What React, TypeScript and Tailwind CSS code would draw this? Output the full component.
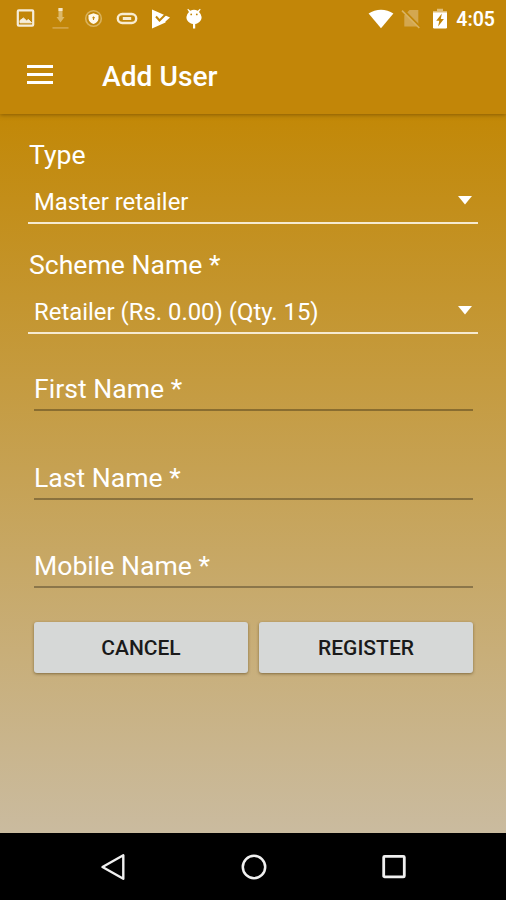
import { useState } from 'react';

const SCHEME = 'Retailer (Rs. 0.00) (Qty. 15)';

function StatusBar() {
  return (
    <div className="h-[37px] pl-4 pr-[11px] flex items-center justify-between text-white">
      <div className="flex items-center gap-[12px]">
        <svg width="22" height="22" viewBox="0 0 22 22" className="opacity-85">
          <rect x="1.8" y="2.3" width="15.4" height="15.4" rx="1" fill="none" stroke="currentColor" strokeWidth="2.2" />
          <path d="M4 14.8 V12.5 L7.5 10 L10.5 12.8 L12.5 11.5 L15.5 14.8 Z" fill="currentColor" stroke="currentColor" strokeWidth="1" />
        </svg>
        <svg width="22" height="24" viewBox="0 0 22 24">
          <path d="M8.5 1 H12.5 V10 H14.5 L10.5 15.5 L6.5 10 H8.5 Z" fill="#dcb868" />
          <rect x="8.5" y="1" width="4" height="3" fill="#f4e6c8" />
          <rect x="2.5" y="20" width="16" height="1.8" fill="#d3a244" />
        </svg>
        <svg width="20" height="22" viewBox="0 0 20 22">
          <circle cx="9.5" cy="10.5" r="7.8" fill="none" stroke="#d9b25c" strokeWidth="1.6" />
          <path d="M9.5 5.3 L14.5 6.9 V10.5 C14.5 13.3 12 15.1 9.5 16.1 C7 15.1 4.5 13.3 4.5 10.5 V6.9 Z" fill="#fff8ea" />
          <path d="M9.5 8.4 V12 M8.3 9.8 H11" stroke="#c28a12" strokeWidth="1.1" />
        </svg>
        <svg width="22" height="22" viewBox="0 0 22 22" fill="none" stroke="#f8ecd2">
          <rect x="1.8" y="6" width="18.4" height="9" rx="4.5" strokeWidth="2.4" />
          <path d="M6.8 10.5 H15.2" strokeWidth="3" />
        </svg>
        <svg width="22" height="22" viewBox="0 0 22 22">
          <path d="M2 1.5 L20 9.5 L15.5 13.5 V14.5 L2 20.5 Z" fill="currentColor" />
          <path d="M6 8.5 L9.5 12.5 L16.5 5.5" fill="none" stroke="#c28608" strokeWidth="2" />
        </svg>
        <svg width="20" height="22" viewBox="0 0 20 22" fill="currentColor">
          <path d="M4 .7 L6.3 2.7 A8 8 0 0 1 13.7 2.7 L16 .7 L16.6 1.5 L15 4.1 A7.8 7.8 0 0 1 17.6 9 C17.6 13 14.5 15.5 11.2 16 V20.5 H9 V16 C5.5 15.5 2.4 13 2.4 9 A7.8 7.8 0 0 1 5 4.1 L3.4 1.5 Z" />
          <circle cx="7.2" cy="6.4" r="0.9" fill="#c28608" />
          <circle cx="12.8" cy="6.4" r="0.9" fill="#c28608" />
        </svg>
      </div>
      <div className="flex items-center">
        <svg width="26" height="22" viewBox="0 0 26 22">
          <path d="M13 20.3 L0.6 5.6 C7.6 0.4 18.4 0.4 25.4 5.6 Z" fill="currentColor" />
        </svg>
        <svg width="20" height="22" viewBox="0 0 20 22" className="ml-[7px]">
          <path d="M8.5 2 H17.3 V18.5 H3.3 V7.5 Z" fill="#d3a750" />
          <path d="M1.6 1.5 L19.4 19.5" stroke="#c28608" strokeWidth="2.6" />
          <path d="M1 2.6 L18.3 20" stroke="#d9b364" strokeWidth="1.6" />
        </svg>
        <svg width="16" height="22" viewBox="0 0 16 22" className="ml-[11px]">
          <path d="M5 0.8 H11 V3 H15 V8 H1 V3 H5 Z" fill="#e0bd77" />
          <path d="M1 4.5 H15 V19.2 Q15 20.4 13.8 20.4 H2.2 Q1 20.4 1 19.2 Z" fill="currentColor" />
          <path d="M9.9 5.6 L4.2 12.8 H7.3 L6.1 18.4 L11.9 10.9 H8.8 Z" fill="#c28608" />
        </svg>
        <span className="ml-[8px] pt-0.5 text-[19.5px] leading-none font-semibold">4:05</span>
      </div>
    </div>
  );
}

function AppBar() {
  return (
    <header className="relative bg-[#c28608] shadow-[0_1px_4px_rgba(80,50,0,0.5)]">
      <StatusBar />
      <div className="h-[77px] pl-[27px] flex items-center">
        <button aria-label="Menu" className="flex flex-col gap-[5px] -mt-0.5">
          <span className="block w-[26px] h-[3px] bg-white" />
          <span className="block w-[26px] h-[3px] bg-white" />
          <span className="block w-[26px] h-[3px] bg-white" />
        </button>
        <h1 className="ml-[49px] pt-0.5 text-[28.2px] leading-8 font-medium text-white">Add User</h1>
      </div>
    </header>
  );
}

function SelectField({ label, value }: { label: string; value: string }) {
  return (
    <div>
      <div className="pl-px text-[26.6px] leading-8">{label}</div>
      <button className="mt-[9px] w-full h-[44px] pt-px pl-1.5 pr-[6px] flex items-center justify-between border-b-2 border-[#f6ead0]">
        <span className="text-[23.9px] leading-8">{value}</span>
        <svg width="14" height="9" viewBox="0 0 14 9" className="-mt-0.5">
          <path d="M0 0 H14 L7 8.5 Z" fill="currentColor" />
        </svg>
      </button>
    </div>
  );
}

function TextField({ label, value, onChange }: { label: string; value: string; onChange: (v: string) => void }) {
  return (
    <input
      value={value}
      placeholder={label}
      onChange={(e) => onChange(e.target.value)}
      className="block w-full h-[39px] pb-1 text-[26.6px] leading-8 border-b-2 border-black/30 bg-transparent outline-none placeholder:text-white"
    />
  );
}

export default function App() {
  const [firstName, setFirstName] = useState('');
  const [lastName, setLastName] = useState('');
  const [mobile, setMobile] = useState('');

  return (
    <div className="w-full h-[900px] flex flex-col font-['Roboto',sans-serif] bg-black overflow-hidden">
      <AppBar />
      <main className="h-[719px] px-7 pt-[25px] text-white bg-[linear-gradient(to_bottom,#c28807,#cabb9f)]">
        <div className="flex flex-col gap-[25px]">
          <SelectField label="Type" value="Master retailer" />
          <SelectField label="Scheme Name *" value={SCHEME} />
        </div>
        <div className="mt-[38px] pl-1.5 pr-[5px] flex flex-col gap-[49.5px]">
          <TextField label="First Name *" value={firstName} onChange={setFirstName} />
          <TextField label="Last Name *" value={lastName} onChange={setLastName} />
          <TextField label="Mobile Name *" value={mobile} onChange={setMobile} />
        </div>
        <div className="mt-[34px] pl-1.5 pr-[5px] grid grid-cols-2 gap-[11px] text-[21px] font-medium text-[#1a1a1a]">
          <button className="h-[51px] pt-0.5 rounded-[3px] bg-[#d6d8d7] shadow-[0_1px_3px_rgba(60,40,0,0.5)]">CANCEL</button>
          <button className="h-[51px] pt-0.5 rounded-[3px] bg-[#d6d8d7] shadow-[0_1px_3px_rgba(60,40,0,0.5)]">REGISTER</button>
        </div>
      </main>
      <nav className="h-[67px] pl-[100px] pr-[99px] flex items-center justify-between bg-black">
        <svg width="26" height="28" viewBox="0 0 26 28">
          <path d="M2.5 14 L23.3 2.3 V25.7 Z" fill="none" stroke="#f0f0f0" strokeWidth="2.4" strokeLinejoin="round" />
        </svg>
        <svg width="26" height="28" viewBox="0 0 26 28">
          <circle cx="13" cy="14" r="11.2" fill="none" stroke="#f0f0f0" strokeWidth="2.5" />
        </svg>
        <svg width="26" height="28" viewBox="0 0 26 28">
          <rect x="2.7" y="3.3" width="20.6" height="20.6" rx="1" fill="none" stroke="#f0f0f0" strokeWidth="2.8" />
        </svg>
      </nav>
    </div>
  );
}
